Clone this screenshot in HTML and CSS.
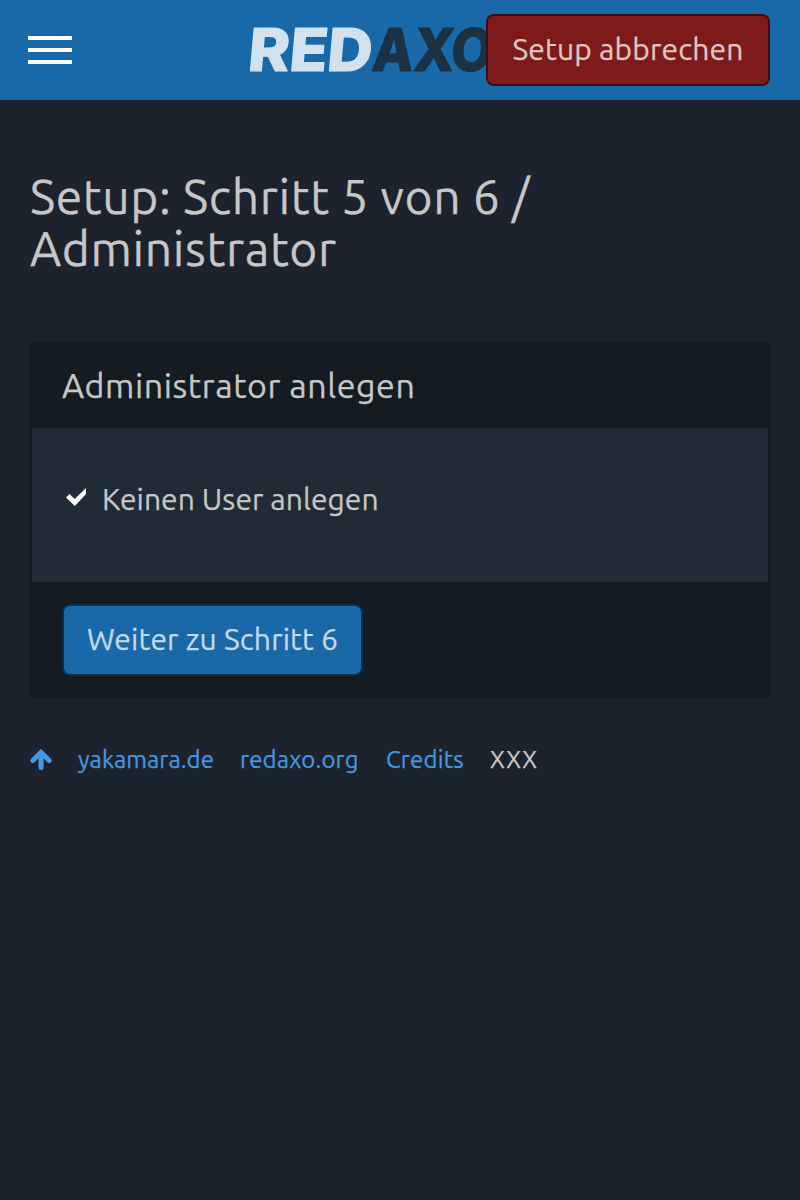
FILE: index.html
```html
<!DOCTYPE html>
<html lang="de">
<head>
<meta charset="utf-8">
<title>REDAXO Setup</title>
<link rel="stylesheet" href="styles.css">
</head>
<body>
<header class="topbar">
  <button class="menu-toggle" aria-label="Menü"><span></span><span></span><span></span></button>
  <svg class="logo" width="252" height="48" viewBox="0 0 252 48" aria-label="REDAXO">
    <g transform="translate(0 45) skewX(-5)">
      <text class="logo-red" x="-2" y="0" textLength="124" lengthAdjust="spacingAndGlyphs">RED</text>
      <text class="logo-axo" x="122" y="0" textLength="120" lengthAdjust="spacingAndGlyphs">AXO</text>
    </g>
  </svg>
  <a class="btn btn-abort">Setup abbrechen</a>
</header>
<main class="page">
  <h1 class="title"><span class="title-step">Setup: Schritt 5 von 6 /</span> <span class="title-name">Administrator</span></h1>
  <section class="panel">
    <header class="panel-heading">Administrator anlegen</header>
    <div class="panel-body">
      <svg class="check" width="22" height="20" viewBox="0 0 22 20"><path d="M0 9.5 3.5 6l5.2 5L20 0v6L8.8 18z"/></svg>
      <span class="check-label">Keinen User anlegen</span>
    </div>
    <footer class="panel-footer"><button class="btn btn-next">Weiter zu Schritt 6</button></footer>
  </section>
  <nav class="links">
    <a class="link-top" aria-label="Nach oben"><svg width="22" height="22" viewBox="0 0 22 22"><path d="M2.8 11.6 11 3.4l8.2 8.2M11 4.5v14"/></svg></a>
    <a class="link-yakamara">yakamara.de</a>
    <a class="link-redaxo">redaxo.org</a>
    <a class="link-credits">Credits</a>
    <span class="version">XXX</span>
  </nav>
</main>
</body>
</html>
```
FILE: styles.css
```css
* { box-sizing: border-box; }
body { margin: 0; min-height: 1200px; background: #1c232c; color: #c6c7c8; font-family: Ubuntu, "Noto Sans", sans-serif; font-size: 30px; -webkit-text-stroke: 0.25px currentColor; }
.topbar { position: relative; display: flex; align-items: center; height: 100px; padding: 0 30px 0 28px; background: #1968a8; }
.menu-toggle { display: flex; flex-direction: column; gap: 8px; width: 44px; padding: 0; border: 0; background: none; }
.menu-toggle span { height: 4px; background: #fff; }
.logo { margin-left: 177px; overflow: visible; font-family: Inter, sans-serif; font-weight: 850; font-size: 59px; stroke-width: 1.2; stroke-linejoin: round; -webkit-text-stroke: 0; }
.logo-red { fill: #d2e1ee; stroke: #d2e1ee; }
.logo-axo { fill: #1b3144; stroke: #1b3144; }
.btn { display: block; height: 72px; padding: 0; border: 2px solid; border-radius: 8px; font-family: inherit; font-size: 30px; line-height: 67px; text-align: center; white-space: nowrap; letter-spacing: 0.15px; }
.btn-abort { position: absolute; right: 30px; top: 14px; width: 284px; background: #7f1a1a; border-color: #3d0c10; color: #dfc6c6; }
.btn-next { width: 301px; padding-bottom: 2px; background: #1968a8; border-color: #0d2f4d; color: #c5d9e9; }
.page { padding: 70px 30px 0; }
.title { margin: 0 0 68px; font-size: 48px; line-height: 52px; font-weight: 400; letter-spacing: 0.6px; }
.title span { display: block; white-space: nowrap; }
.panel { border: 2px solid #151c21; background: #202b35; }
.panel-heading { height: 84px; padding-left: 30px; background: #151c21; font-size: 34px; line-height: 82px; letter-spacing: 0.55px; }
.panel-body { display: flex; align-items: center; height: 154px; padding: 0 0 12px 34px; }
.check { margin-top: -3px; fill: #fff; }
.check-label { margin-left: 14px; letter-spacing: 0.05px; }
.panel-footer { height: 114px; padding: 22px 30px; background: #151c21; }
.links { display: flex; align-items: center; height: 40px; margin-top: 41px; font-size: 24px; color: #4199e5; }
.links svg { display: block; margin-top: 1px; fill: none; stroke: currentColor; stroke-width: 5; stroke-linecap: round; }
.link-top { width: 48px; }
.link-yakamara { width: 162px; }
.link-redaxo { width: 146px; letter-spacing: 0.15px; }
.link-credits { width: 104px; letter-spacing: 0.15px; }
.version { color: #c6c7c8; letter-spacing: 0.9px; }
```
